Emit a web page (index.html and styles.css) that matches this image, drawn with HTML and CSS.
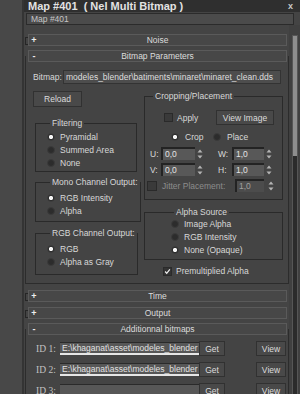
FILE: index.html
```html
<!DOCTYPE html>
<html lang="en">
<head>
  <meta charset="UTF-8" />
  <title>Map #401</title>
  <link rel="stylesheet" href="styles.css">
</head>
<body>
  <div class="window">
    <div class="side"></div>
    <div class="main">
      <div class="titlebar">
        <span class="title">Map #401&nbsp; ( Nel Multi Bitmap )</span>
        <span class="close">x</span>
      </div>
      <div class="namebar">Map #401</div>

      <div class="panel">
        <div class="rollouts">
          <div class="rollout closed first">
            <div class="rhead"><span class="sign">+</span><span>Noise</span><span></span></div>
          </div>

          <div class="rollout open">
            <div class="rhead"><span class="sign">-</span><span>Bitmap Parameters</span><span></span></div>
            <div class="rbody">
              <div class="bitmap-row">
                <span class="bitmap-label">Bitmap:</span>
                <div class="path-field">modeles_blender\batiments\minaret\minaret_clean.dds</div>
              </div>

              <div class="cols">
                <div class="col-left">
                  <button class="btn reload">Reload</button>

                  <fieldset class="group filtering">
                    <legend>Filtering</legend>
                    <div class="opt"><span class="radio on"></span>Pyramidal</div>
                    <div class="opt"><span class="radio"></span>Summed Area</div>
                    <div class="opt"><span class="radio"></span>None</div>
                  </fieldset>

                  <fieldset class="group mono">
                    <legend>Mono Channel Output:</legend>
                    <div class="opt"><span class="radio on"></span>RGB Intensity</div>
                    <div class="opt"><span class="radio"></span>Alpha</div>
                  </fieldset>

                  <fieldset class="group rgb">
                    <legend>RGB Channel Output:</legend>
                    <div class="opt"><span class="radio on"></span>RGB</div>
                    <div class="opt"><span class="radio"></span>Alpha as Gray</div>
                  </fieldset>
                </div>

                <div class="col-right">
                  <fieldset class="group crop">
                    <legend>Cropping/Placement</legend>
                    <div class="apply-row">
                      <span class="check"></span>
                      <span>Apply</span>
                      <button class="btn view-image">View Image</button>
                    </div>
                    <div class="mode-row">
                      <div class="opt"><span class="radio on"></span>Crop</div>
                      <div class="opt"><span class="radio"></span>Place</div>
                    </div>
                    <div class="spin-row">
                      <div class="spin">
                        <span class="spin-label u">U:</span>
                        <span class="spin-field short">0,0</span>
                        <svg class="arrows" width="6" height="12" viewBox="0 0 6 12"><path d="M0.5 4.5 L3 1.5 L5.5 4.5 Z M0.5 7.5 L3 10.5 L5.5 7.5 Z" fill="#b4b4b4"/></svg>
                      </div>
                      <div class="spin">
                        <span class="spin-label w">W:</span>
                        <span class="spin-field">1,0</span>
                        <svg class="arrows" width="6" height="12" viewBox="0 0 6 12"><path d="M0.5 4.5 L3 1.5 L5.5 4.5 Z M0.5 7.5 L3 10.5 L5.5 7.5 Z" fill="#b4b4b4"/></svg>
                      </div>
                    </div>
                    <div class="spin-row">
                      <div class="spin">
                        <span class="spin-label u">V:</span>
                        <span class="spin-field short">0,0</span>
                        <svg class="arrows" width="6" height="12" viewBox="0 0 6 12"><path d="M0.5 4.5 L3 1.5 L5.5 4.5 Z M0.5 7.5 L3 10.5 L5.5 7.5 Z" fill="#b4b4b4"/></svg>
                      </div>
                      <div class="spin">
                        <span class="spin-label w">H:</span>
                        <span class="spin-field">1,0</span>
                        <svg class="arrows" width="6" height="12" viewBox="0 0 6 12"><path d="M0.5 4.5 L3 1.5 L5.5 4.5 Z M0.5 7.5 L3 10.5 L5.5 7.5 Z" fill="#b4b4b4"/></svg>
                      </div>
                    </div>
                    <div class="jitter-row">
                      <span class="check big"></span>
                      <span class="disabled">Jitter Placement:</span>
                      <span class="spin-field jitter">1,0</span>
                      <svg class="arrows" width="6" height="12" viewBox="0 0 6 12"><path d="M0.5 4.5 L3 1.5 L5.5 4.5 Z M0.5 7.5 L3 10.5 L5.5 7.5 Z" fill="#b4b4b4"/></svg>
                    </div>
                  </fieldset>

                  <fieldset class="group alpha">
                    <legend>Alpha Source</legend>
                    <div class="opt"><span class="radio"></span>Image Alpha</div>
                    <div class="opt"><span class="radio"></span>RGB Intensity</div>
                    <div class="opt"><span class="radio on"></span>None (Opaque)</div>
                  </fieldset>

                  <div class="premult-row">
                    <span class="check on">
                      <svg width="9" height="9" viewBox="0 0 9 9"><path d="M1.5 4.5 L3.5 6.8 L7.5 1.8" fill="none" stroke="#f0f0f0" stroke-width="1.6"/></svg>
                    </span>
                    <span>Premultiplied Alpha</span>
                  </div>
                </div>
              </div>
            </div>
          </div>

          <div class="rollout closed time">
            <div class="rhead"><span class="sign">+</span><span>Time</span><span></span></div>
          </div>

          <div class="rollout closed output">
            <div class="rhead"><span class="sign">+</span><span>Output</span><span></span></div>
          </div>

          <div class="rollout open extra">
            <div class="rhead"><span class="sign">-</span><span>Additionnal bitmaps</span><span></span></div>
            <div class="rbody">
              <div class="id-row">
                <span class="id-label">ID 1:</span>
                <div class="id-field">E:\khaganat\asset\modeles_blender</div>
                <button class="btn get">Get</button>
                <button class="btn view">View</button>
              </div>
              <div class="id-row">
                <span class="id-label">ID 2:</span>
                <div class="id-field">E:\khaganat\asset\modeles_blender</div>
                <button class="btn get">Get</button>
                <button class="btn view">View</button>
              </div>
              <div class="id-row">
                <span class="id-label">ID 3:</span>
                <div class="id-field empty"></div>
                <button class="btn get">Get</button>
                <button class="btn view">View</button>
              </div>
            </div>
          </div>
        </div>

        <div class="scroll">
          <div class="track"><div class="thumb"></div></div>
        </div>
      </div>
    </div>
  </div>
</body>
</html>
```

FILE: styles.css
```css
* { margin: 0; padding: 0; box-sizing: border-box; }

body {
  width: 300px;
  height: 394px;
  overflow: hidden;
  background: #464646;
  font-family: 'Liberation Sans', Arial, sans-serif;
  font-size: 8.5px;
  color: #d8d8d8;
}

.window {
  display: grid;
  grid-template-columns: 22px 1fr;
  height: 394px;
}

.side { background: #484848; }

.main {
  border-left: 2px solid #343434;
  background: #444444;
  display: flex;
  flex-direction: column;
  min-height: 0;
}

/* title + name */
.titlebar {
  height: 12px;
  background: #2f2f2f;
  display: flex;
  align-items: center;
  justify-content: space-between;
  padding: 0 7px 0 4px;
}

.title {
  font-size: 11px;
  font-weight: bold;
  color: #e2e2e2;
  line-height: 12px;
  white-space: nowrap;
}

.close {
  font-size: 9px;
  font-weight: bold;
  color: #c8c8c8;
}

.namebar {
  height: 12px;
  margin: 1px 6px 0 2px;
  border: 1px solid #2b2b2b;
  background: #4b4b4b;
  padding-left: 4px;
  line-height: 10px;
  color: #c6c6c6;
}

/* rollouts */
.panel {
  flex: 1;
  display: grid;
  grid-template-columns: 1fr 11px;
  min-height: 0;
}

.rollouts {
  padding-top: 9px;
  display: flex;
  flex-direction: column;
}

.rollout.open { margin-top: 4px; }
.rollout.time { margin-top: 6px; }
.rollout.output { margin-top: 5px; }
.rollout.extra { margin-top: 4px; }
.rollout.first { margin-top: 0; }

.rhead {
  height: 12px;
  margin: 0 2px 0 4px;
  border: 1px solid #5a5a5a;
  background: #474747;
  display: grid;
  grid-template-columns: 10px 1fr 10px;
  align-items: center;
  text-align: center;
  line-height: 10px;
  color: #dcdcdc;
  position: relative;
}

.rhead .sign {
  font-weight: bold;
  font-size: 9px;
  color: #eeeeee;
}

.rollout.closed .rhead::before {
  content: "";
  position: absolute;
  left: -4px;
  top: 2px;
  width: 2px;
  height: 6px;
  border: 1px solid #262626;
  border-right: none;
}

.rbody {
  margin: -6px 0 0 1px;
  border: 1px solid #2c2c2c;
  border-top: none;
  padding: 6px 0 7px;
}

/* bitmap params */
.bitmap-row {
  display: flex;
  align-items: center;
  gap: 2px;
  margin: 8px 7px 0 7px;
}

.bitmap-label { width: 28px; white-space: nowrap; }

.path-field {
  flex: 1;
  height: 14px;
  background: #4d4d4d;
  border: 1px solid #333333;
  padding-left: 2px;
  line-height: 12px;
  white-space: nowrap;
  overflow: hidden;
  color: #dedede;
}

.cols {
  display: grid;
  grid-template-columns: 104px 139px;
  column-gap: 7px;
  margin: 7px 0 0 7px;
}

.btn {
  font-family: 'Liberation Sans', Arial, sans-serif;
  font-size: 8.5px;
  color: #dcdcdc;
  background: #494949;
  border: 1px solid #313131;
}

.reload {
  width: 49px;
  height: 16px;
  display: block;
}

.group {
  border: 1px solid #2a2a2a;
  margin-left: 2px;
  width: 102px;
  padding: 2px 0 2px 11px;
}

.group legend {
  margin-left: 3px;
  padding: 0 2px;
  line-height: 10px;
  font-size: 8.5px;
  white-space: nowrap;
}

.filtering { margin-top: 11px; }
.mono { margin-top: 5px; padding: 4px 0 4px 11px; }
.rgb { margin-top: 6px; padding: 4px 0 6px 11px; }

.opt {
  display: flex;
  align-items: center;
  gap: 5px;
  height: 13px;
  white-space: nowrap;
}

.radio {
  width: 8px;
  height: 8px;
  flex: none;
  border-radius: 50%;
  background: #2c2c2c;
  border: 1px solid #3b3b3b;
}

.radio.on {
  background: radial-gradient(circle, #f6f6f6 0 1.8px, #2c2c2c 2.4px);
}

.check {
  width: 9px;
  height: 9px;
  flex: none;
  background: #3a3a3a;
  border: 1px solid #2a2a2a;
  display: flex;
  align-items: center;
  justify-content: center;
}

.check.big { width: 10px; height: 10px; margin-left: -3px; }
.check.on { background: #333333; }

/* cropping */
.crop {
  width: 139px;
  margin-left: 0;
  padding: 0 8px 7px 5px;
}

.apply-row {
  display: flex;
  align-items: center;
  gap: 4px;
  height: 15px;
  margin-top: 9px;
  padding-left: 14px;
}

.view-image {
  margin-left: auto;
  width: 58px;
  height: 15px;
}

.mode-row {
  display: grid;
  grid-template-columns: 42px 1fr;
  margin-top: 5px;
  padding-left: 21px;
}

.mode-row .opt { gap: 6px; }

.spin-row {
  display: flex;
  gap: 15px;
  margin-top: 4px;
  height: 13px;
}

.spin-row + .spin-row { margin-top: 3px; }

.spin {
  display: flex;
  align-items: center;
}

.spin-label { width: 11px; }
.spin-label.w { width: 14px; }

.spin-field {
  width: 32px;
  height: 13px;
  background: #585858;
  border-top: 2px solid #232323;
  border-left: 2px solid #232323;
  padding-left: 2px;
  line-height: 11px;
  color: #e4e4e4;
}

.spin-field.short { width: 34px; }

.arrows { margin-left: 2px; flex: none; }

.jitter-row {
  display: flex;
  align-items: center;
  gap: 5px;
  height: 13px;
  margin-top: 3px;
}

.disabled { color: #8c8c8c; white-space: nowrap; }

.spin-field.jitter {
  margin-left: auto;
  width: 29px;
  background: #4c4c4c;
  color: #a0a0a0;
  margin-right: -3px;
}

.alpha {
  width: 139px;
  margin: 7px 0 0 0;
  padding: 0 0 3px 26px;
}

.premult-row {
  display: flex;
  align-items: center;
  gap: 4px;
  height: 10px;
  margin: 6px 0 0 19px;
}

/* additional bitmaps */
.extra .rbody { padding-bottom: 0; }

.id-row {
  display: flex;
  align-items: center;
  height: 15px;
  margin: 6px 0 0 10px;
}

.id-label {
  width: 24px;
  font-family: 'Liberation Serif', 'Times New Roman', serif;
  font-size: 9.5px;
  color: #c2c2c2;
}

.id-field {
  width: 139px;
  height: 13px;
  background: #575757;
  border-top: 1px solid #2a2a2a;
  border-bottom: 2px solid #e6e6e6;
  padding-left: 2px;
  line-height: 10px;
  white-space: nowrap;
  overflow: hidden;
  color: #e2e2e2;
}

.id-field.empty { border-bottom-color: #575757; }

.get {
  width: 26px;
  height: 15px;
}

.view {
  width: 30px;
  height: 15px;
  margin-left: 31px;
}

/* scrollbar */
.scroll {
  padding: 10px 2px 0 3px;
  background: #404040;
}

.track {
  height: 100%;
  border: 1px solid #565656;
  background: #2b2b2b;
}

.thumb {
  height: 120px;
  background: #8e8e8e;
}
```
